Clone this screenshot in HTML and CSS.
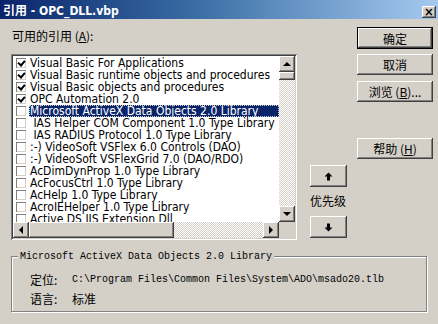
FILE: index.html
```html
<!DOCTYPE html>
<html lang="zh-CN">
<head>
  <meta charset="UTF-8">
  <title>引用 - OPC_DLL.vbp</title>
  <link rel="stylesheet" href="styles.css">
</head>
<body>
  <div class="window">
    <div class="titlebar">
      <span class="title">引用 - OPC_DLL.vbp</span>
      <span class="close">×</span>
    </div>

    <div class="main">
      <div class="refs">
        <div class="label">可用的引用 (<u>A</u>):</div>
        <div class="listbox">
          <div class="list-area">
            <ul class="items">
              <li><span class="check on"></span><span class="name">Visual Basic For Applications</span></li>
              <li><span class="check on"></span><span class="name">Visual Basic runtime objects and procedures</span></li>
              <li><span class="check on"></span><span class="name">Visual Basic objects and procedures</span></li>
              <li><span class="check on"></span><span class="name">OPC Automation 2.0</span></li>
              <li class="selected"><span class="check"></span><span class="name">Microsoft ActiveX Data Objects 2.0 Library</span></li>
              <li><span class="check"></span><span class="name">&nbsp;IAS Helper COM Component 1.0 Type Library</span></li>
              <li><span class="check"></span><span class="name">&nbsp;IAS RADIUS Protocol 1.0 Type Library</span></li>
              <li><span class="check"></span><span class="name">:-) VideoSoft VSFlex 6.0 Controls (DAO)</span></li>
              <li><span class="check"></span><span class="name">:-) VideoSoft VSFlexGrid 7.0 (DAO/RDO)</span></li>
              <li><span class="check"></span><span class="name">AcDimDynProp 1.0 Type Library</span></li>
              <li><span class="check"></span><span class="name">AcFocusCtrl 1.0 Type Library</span></li>
              <li><span class="check"></span><span class="name">AcHelp 1.0 Type Library</span></li>
              <li><span class="check"></span><span class="name">AcroIEHelper 1.0 Type Library</span></li>
              <li><span class="check"></span><span class="name">Active DS IIS Extension Dll</span></li>
            </ul>
            <div class="vscroll">
              <span class="sbtn"><span class="tri up"></span></span>
              <span class="vthumb"></span>
              <span class="track"></span>
              <span class="sbtn"><span class="tri down"></span></span>
            </div>
          </div>
          <div class="hscroll">
            <span class="sbtn"><span class="tri left"></span></span>
            <span class="hthumb"></span>
            <span class="track"></span>
            <span class="sbtn"><span class="tri right"></span></span>
            <span class="corner"></span>
          </div>
        </div>
      </div>

      <div class="priority">
        <span class="btn arrow">
          <svg width="9" height="9" viewBox="0 0 9 9"><path d="M4.5 0.5 L8.5 4.5 H6 V8.5 H3 V4.5 H0.5 Z" fill="#000"/></svg>
        </span>
        <span class="prio-label">优先级</span>
        <span class="btn arrow">
          <svg width="9" height="9" viewBox="0 0 9 9"><path d="M4.5 8.5 L8.5 4.5 H6 V0.5 H3 V4.5 H0.5 Z" fill="#000"/></svg>
        </span>
      </div>

      <div class="actions">
        <span class="btn default">确定</span>
        <span class="btn">取消</span>
        <span class="btn">浏览 (<u>B</u>)...</span>
        <span class="btn help">帮助 (<u>H</u>)</span>
      </div>
    </div>

    <div class="info">
      <div class="legend">Microsoft ActiveX Data Objects 2.0 Library</div>
      <div class="info-row"><span class="key">定位:</span><span class="mono">C:\Program Files\Common Files\System\ADO\msado20.tlb</span></div>
      <div class="info-row"><span class="key">语言:</span><span class="value">标准</span></div>
    </div>
  </div>
</body>
</html>
```

FILE: styles.css
```css
body {
  margin: 0;
  background-color: #d4d0c8;
  font-family: "DejaVu Sans Condensed", "DejaVu Sans", "Noto Sans CJK SC", sans-serif;
  font-size: 11px;
  color: #000;
}

.window {
  width: 438px;
  height: 324px;
  overflow: hidden;
  background-color: #d4d0c8;
}

.titlebar {
  height: 19px;
  display: flex;
  align-items: center;
  justify-content: space-between;
  padding: 0 2px 0 3px;
  background: linear-gradient(90deg, #0a246a 0%, #3a6ea5 45%, #a6caf0 100%);
}

.title {
  color: #fff;
  font-weight: bold;
  font-size: 12px;
  font-family: "DejaVu Sans Condensed", "Noto Sans CJK SC", sans-serif;
}

.close {
  width: 14px;
  height: 12px;
  margin-top: 4px;
  display: flex;
  align-items: center;
  justify-content: center;
  background: #d4d0c8;
  font-size: 13px;
  font-weight: bold;
  line-height: 1;
  box-shadow: inset -1px -1px #404040, inset 1px 1px #fff, inset -2px -2px #808080;
}

.main {
  display: flex;
  padding-left: 11px;
}

/* lista de referencias */
.refs {
  width: 286px;
}

.label {
  font-family: "Noto Sans CJK SC", sans-serif;
  font-size: 12px;
  line-height: 14px;
  margin: 10px 0 0 1px;
  height: 25px;
}

.listbox {
  width: 286px;
  height: 186px;
  box-sizing: border-box;
  background: #fff;
  box-shadow: inset 1px 1px #808080, inset -1px -1px #fff, inset 2px 2px #404040, inset -2px -2px #d4d0c8;
  padding: 2px;
  display: flex;
  flex-direction: column;
}

.list-area {
  flex: 1;
  display: flex;
  overflow: hidden;
}

.items {
  list-style: none;
  margin: 0;
  padding: 1px 0 0 3px;
  flex: 1;
  overflow: hidden;
  font-size: 12px;
}

.items li {
  height: 12px;
  display: flex;
  align-items: center;
  white-space: nowrap;
}

.check {
  width: 10px;
  height: 10px;
  flex: none;
  margin-right: 3px;
  box-sizing: border-box;
  background: #fff;
  box-shadow: inset 1px 1px #808080, inset -1px -1px #d4d0c8;
  position: relative;
}

.check.on::after {
  content: "";
  position: absolute;
  left: 3px;
  top: 1px;
  width: 3px;
  height: 5px;
  border: solid #000;
  border-width: 0 2px 2px 0;
  transform: rotate(40deg);
}

.name {
  flex: 1;
  line-height: 12px;
  padding-left: 1px;
}

.selected .name {
  background: #0a246a;
  color: #fff;
  outline: 1px dotted #d4d0c8;
  outline-offset: -1px;
}

.vscroll {
  width: 16px;
  display: flex;
  flex-direction: column;
  background: repeating-conic-gradient(#fff 0 25%, #d4d0c8 0 50%) 0 0 / 2px 2px;
}

.hscroll {
  height: 16px;
  display: flex;
  background: repeating-conic-gradient(#fff 0 25%, #d4d0c8 0 50%) 0 0 / 2px 2px;
}

.sbtn, .vthumb, .hthumb, .corner {
  flex: none;
  background: #d4d0c8;
  box-shadow: inset -1px -1px #404040, inset 1px 1px #fff, inset -2px -2px #808080;
  display: flex;
  align-items: center;
  justify-content: center;
}

.sbtn {
  width: 16px;
  height: 16px;
}

.corner {
  width: 16px;
  box-shadow: none;
}

.vthumb {
  height: 8px;
}

.hthumb {
  width: 145px;
}

.track {
  flex: 1;
}

.tri {
  width: 0;
  height: 0;
  border: 4px solid transparent;
}

.tri.up { border-bottom-color: #000; border-top-width: 0; }
.tri.down { border-top-color: #000; border-bottom-width: 0; }
.tri.left { border-right-color: #000; border-left-width: 0; }
.tri.right { border-left-color: #000; border-right-width: 0; }

/* botones */
.btn {
  display: flex;
  align-items: center;
  justify-content: center;
  box-sizing: border-box;
  background: #d4d0c8;
  font-family: "Noto Sans CJK SC", sans-serif;
  font-size: 12px;
  box-shadow: inset -1px -1px #404040, inset 1px 1px #fff, inset -2px -2px #808080;
}

.priority {
  display: flex;
  flex-direction: column;
  width: 37px;
  margin: 146px 0 0 13px;
}

.arrow {
  height: 22px;
}

.prio-label {
  font-family: "Noto Sans CJK SC", sans-serif;
  font-size: 12px;
  line-height: 14px;
  margin: 7px 0 8px;
}

.actions {
  display: flex;
  flex-direction: column;
  gap: 5px;
  width: 76px;
  margin: 8px 0 0 10px;
}

.actions .btn {
  height: 21px;
}

.actions .default {
  height: 22px;
  box-shadow: inset 0 0 0 1px #000, inset -2px -2px #404040, inset 2px 2px #fff, inset -3px -3px #808080;
}

.actions .btn:nth-child(3) {
  margin-top: 1px;
}

.actions .help {
  margin-top: 31px;
}

/* marco de información */
.info {
  margin: 16px 0 0 11px;
  width: 416px;
  height: 56px;
  box-sizing: border-box;
  border: 1px solid #808080;
  box-shadow: 1px 1px #fff, inset 1px 1px #fff;
  position: relative;
  padding: 13px 0 0 18px;
}

.legend {
  position: absolute;
  top: -6px;
  left: 6px;
  padding: 0 2px;
  background: #d4d0c8;
  font-family: "Liberation Mono", monospace;
  font-size: 10px;
  line-height: 11px;
}

.info-row {
  display: flex;
  height: 19px;
  align-items: center;
}

.key {
  width: 42px;
  font-family: "Noto Sans CJK SC", sans-serif;
  font-size: 12px;
}

.mono {
  font-family: "Liberation Mono", monospace;
  font-size: 10px;
}

.value {
  font-family: "Noto Sans CJK SC", sans-serif;
  font-size: 12px;
}
```
